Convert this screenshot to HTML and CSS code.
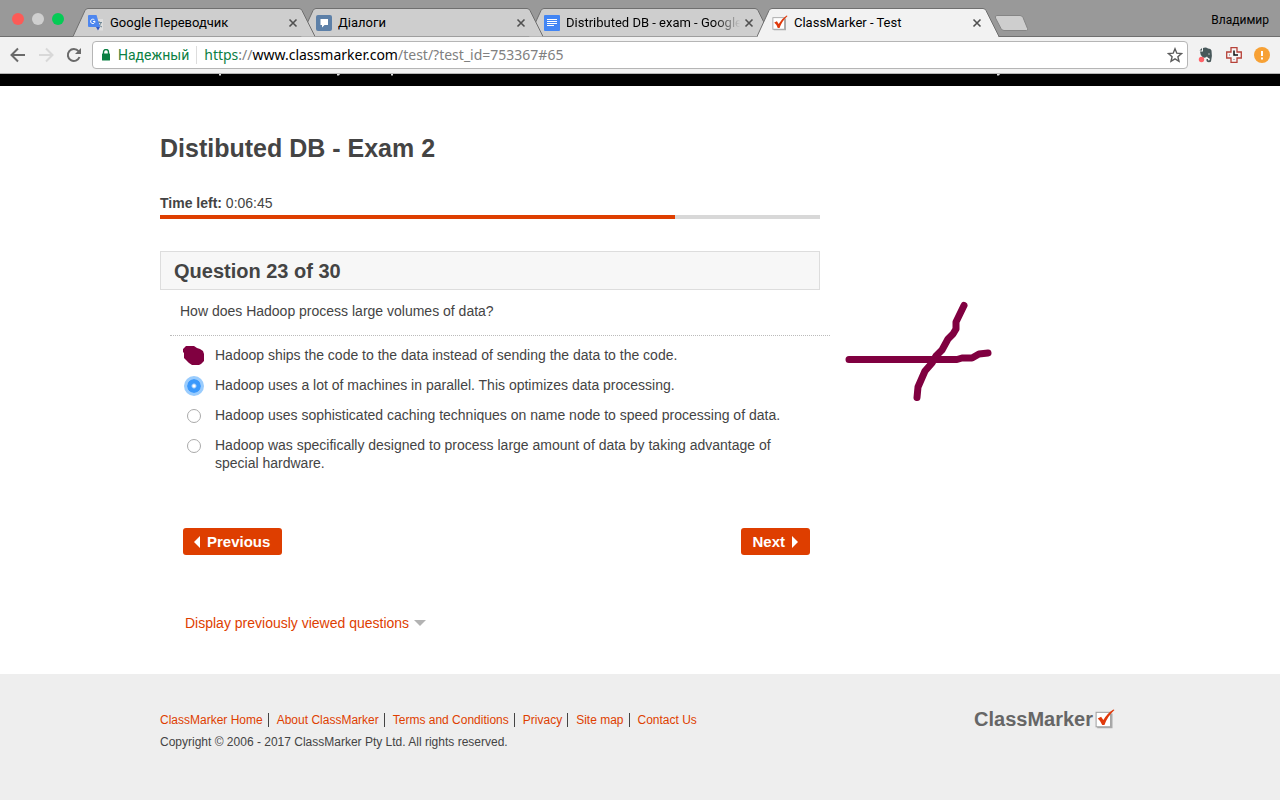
FILE: index.html
```html
<!DOCTYPE html>
<html lang="en">
<head>
<meta charset="utf-8">
<title>ClassMarker - Test</title>
<link rel="stylesheet" href="styles.css">
</head>
<body>
<svg class="defs" aria-hidden="true">
  <symbol id="tab-shape" viewBox="0 0 242 29">
    <path d="M0 28.5 L12 2.5 Q13 .5 15 .5 H226 Q228 .5 229 2.5 L242 28.5" stroke="#6f6f6f"/>
  </symbol>
  <symbol id="close" viewBox="0 0 10 10"><path d="M1.500 1.500l7 7M8.500 1.500l-7 7" stroke="#505050" stroke-width="1.600" fill="none"/></symbol>
  <symbol id="check-logo" viewBox="0 0 18 18">
    <path d="M2 16.500h13V4" fill="none" stroke="#aaa" stroke-width="1.500"/>
    <rect x="1" y="3" width="13" height="13" fill="#fff" stroke="#a5a5a5"/>
    <path d="M2.500 8.500L5.500 7 7.500 10 Q11 4 16.500 .5L17.500 1Q11 7 8.500 14.500H6.500Q5 10.500 2.500 8.500Z" fill="#e03a0c"/>
  </symbol>
</svg>

<header class="browser">
  <div class="tab-strip">
    <div class="lights"><i class="light red"></i><i class="light gray"></i><i class="light green"></i></div>
    <nav class="tabs" aria-label="Tabs">
      <div class="tab first">
        <svg class="shape" aria-hidden="true"><use href="#tab-shape"/></svg>
        <svg class="favicon" viewBox="0 0 16 16" aria-hidden="true">
          <path d="M5 4h10v11.500H10z" fill="#dedede"/>
          <path d="M8.500 7.500h5.500M11 6v1.500M13 8q-1 3-4 4M9.500 8q1.500 3 4.500 4" stroke="#6f8795" fill="none"/>
          <path d="M1 0h7.500L12 12H1Q0 12 0 11V1Q0 0 1 0Z" fill="#4d86ef"/>
          <path d="M8 12h4l-2 3.500z" fill="#3157c4"/>
          <path d="M6.500 5A2.200 2.200 0 1 0 7 6.500H5" fill="none" stroke="#fff"/>
        </svg>
        <span class="tab-title">Google Переводчик</span>
        <button class="close" aria-label="Close tab"><svg width="10" height="10"><use href="#close"/></svg></button>
      </div>
      <div class="tab second">
        <svg class="shape" aria-hidden="true"><use href="#tab-shape"/></svg>
        <svg class="favicon" viewBox="0 0 16 16" aria-hidden="true"><rect width="16" height="16" rx="2" fill="#5d80a8"/><path d="M4.500 4h7.500v6H8.500L6 12.500V10H4.500Z" fill="#fff"/></svg>
        <span class="tab-title">Діалоги</span>
        <button class="close" aria-label="Close tab"><svg width="10" height="10"><use href="#close"/></svg></button>
      </div>
      <div class="tab">
        <svg class="shape" aria-hidden="true"><use href="#tab-shape"/></svg>
        <svg class="favicon" viewBox="0 0 16 16" aria-hidden="true"><rect width="16" height="16" rx="1" fill="#4285f4"/><path d="M3 4.500h10M3 6.500h10M3 8.500h10M3 10.500h7" stroke="#fff"/></svg>
        <span class="tab-title faded">Distributed DB - exam - Google</span>
        <button class="close" aria-label="Close tab"><svg width="10" height="10"><use href="#close"/></svg></button>
      </div>
      <div class="tab active">
        <svg class="shape" aria-hidden="true"><use href="#tab-shape"/></svg>
        <svg class="favicon" viewBox="0 0 18 18" aria-hidden="true"><use href="#check-logo"/></svg>
        <span class="tab-title">ClassMarker - Test</span>
        <button class="close" aria-label="Close tab"><svg width="10" height="10"><use href="#close"/></svg></button>
      </div>
    </nav>
    <button class="new-tab" aria-label="New tab"><svg width="34" height="17" viewBox="0 0 34 17"><path d="M3 .5h23q2 0 3 2l4.500 11q1 2-1 2H10q-2 0-3-2L1.500 3Q.5.5 3 .5Z" fill="#cecece" stroke="#858585"/></svg></button>
    <button class="profile">Владимир</button>
  </div>
  <div class="toolbar">
    <button aria-label="Back"><svg width="16" height="16" viewBox="0 0 16 16"><path d="M15 8H2M8 1.500L1.500 8 8 14.500" fill="none" stroke="#6a6a6a" stroke-width="2"/></svg></button>
    <button aria-label="Forward"><svg width="16" height="16" viewBox="0 0 16 16"><path d="M1 8h13M8 1.500L14.500 8 8 14.500" fill="none" stroke="#d8d8d8" stroke-width="2"/></svg></button>
    <button aria-label="Reload"><svg width="16" height="16" viewBox="0 0 16 16"><path d="M13.500 10A6 6 0 1 1 12.500 4.200" fill="none" stroke="#6a6a6a" stroke-width="2"/><path d="M15 1v6H9z" fill="#6a6a6a"/></svg></button>
    <div class="address">
      <svg width="10" height="12" viewBox="0 0 10 12" aria-hidden="true"><path d="M2.500 5V3a2.500 2.500 0 0 1 5 0v2" fill="none" stroke="#0b8043" stroke-width="1.400"/><rect x="1" y="4.500" width="8" height="7" rx=".5" fill="#0b8043"/></svg>
      <span class="secure">Надежный</span>
      <div class="url" role="textbox" aria-label="Address" contenteditable="true" spellcheck="false"><span class="scheme">https</span>://<span class="host">www.classmarker.com</span>/test/?test_id=753367#65</div>
      <button aria-label="Bookmark"><svg width="16" height="16" viewBox="0 0 16 16"><path d="M8 1.800l1.800 4.400 4.700.4-3.600 3.100 1.100 4.600L8 11.900l-4 2.400 1.100-4.600L1.500 6.600l4.700-.4Z" fill="none" stroke="#5c5c5c" stroke-width="1.400"/></svg></button>
    </div>
    <button aria-label="Web clipper"><svg width="16" height="16" viewBox="0 0 16 16"><path d="M5 1q3-1 5 .5 3 0 3.500 2 1 5-.5 11Q12 15.500 9.500 15 8 14.500 8.500 12h1.500q-.5 1.500 1 1.500 1.500-.5.500-2-2-.5-2.500-2-1 1.500-4 1Q2 8 2 4.500h3Z" fill="#48585a"/><path d="M1.500 3.500L4 1v2.500Z" fill="#48585a"/><circle cx="11" cy="7" r=".7" fill="#ddd"/><circle cx="3.500" cy="12.500" r="2.700" fill="#ff6268"/></svg></button>
    <button aria-label="Timer"><svg width="16" height="16" viewBox="1 1 16 16"><path d="M6 1.700h6V6h4.300v6H12v4.300H6V12H1.700V6H6Z" fill="#f7f5f5" stroke="#b64239" stroke-width="1.300"/><path d="M9 4.500V9h4" stroke="#111" stroke-width="1.500" fill="none"/><path d="M4 9h1M9 13v1" stroke="#777"/></svg></button>
    <button aria-label="Notice"><svg width="16" height="16" viewBox="0 0 16 16"><circle cx="8" cy="8" r="8" fill="#f7a135"/><path d="M8 4v5M8 10.500v2" stroke="#fff" stroke-width="2"/></svg></button>
  </div>
</header>

<div class="site-bar">
  <svg width="960" height="2" viewBox="0 0 960 2" aria-hidden="true"><path d="M59 0h2v1.500h-2zM177 0h3l-1 1.500h-2zM231 0h2v1.500h-2zM837 0h3l-1 1.500h-2z" fill="#ddd"/></svg>
</div>

<main class="page">
  <h1>Distibuted DB - Exam 2</h1>
  <form class="quiz">
    <p class="time"><b>Time left:</b> 0:06:45</p>
    <div class="progress" role="progressbar" aria-label="Time used" aria-valuenow="78"><div class="progress-fill" style="width:78%"></div></div>
    <h2>Question 23 of 30</h2>
    <p class="question" id="question">How does Hadoop process large volumes of data?</p>
    <div class="answers" role="radiogroup" aria-labelledby="question">
      <label><input type="radio" name="answer"><span>Hadoop ships the code to the data instead of sending the data to the code.</span>
        <svg class="blot" width="22" height="20" viewBox="0 0 22 20" aria-hidden="true"><path d="M0 3L3 0H11L14 2 17 3 20 5 21 8V15L18 18 16 19H9L6 17 3 14 1 12V7L0 6Z" fill="#800040"/></svg></label>
      <label><input type="radio" name="answer" checked><span>Hadoop uses a lot of machines in parallel. This optimizes data processing.</span></label>
      <label><input type="radio" name="answer"><span>Hadoop uses sophisticated caching techniques on name node to speed processing of data.</span></label>
      <label><input type="radio" name="answer"><span>Hadoop was specifically designed to process large amount of data by taking advantage of special hardware.</span></label>
      <svg class="cross" width="150" height="102" viewBox="0 0 150 102" aria-hidden="true"><path d="M5 58.500H113L118 57H128L135 53 144 52M120 4.500L112 21V28L109 33 104 38 98 49 92 55 88 62 81 70 74 86 73 96.500" fill="none" stroke="#800040" stroke-width="7" stroke-linecap="round" stroke-linejoin="round"/></svg>
    </div>
    <div class="actions">
      <button type="button"><svg width="6" height="12" viewBox="0 0 6 12" aria-hidden="true"><path d="M6 0v12L0 6Z" fill="#fff"/></svg>Previous</button>
      <button type="button">Next<svg width="6" height="12" viewBox="0 0 6 12" aria-hidden="true"><path d="M0 0v12l6-6Z" fill="#fff"/></svg></button>
    </div>
    <a class="viewed" href="#viewed">Display previously viewed questions<svg width="12" height="6" viewBox="0 0 12 6" aria-hidden="true"><path d="M0 0h12L6 6Z" fill="#b3b3b3"/></svg></a>
  </form>
</main>

<footer class="footer">
  <div class="footer-inner">
    <div>
      <nav class="links" aria-label="Footer">
        <a href="#home">ClassMarker Home</a>
        <a href="#about">About ClassMarker</a>
        <a href="#terms">Terms and Conditions</a>
        <a href="#privacy">Privacy</a>
        <a href="#sitemap">Site map</a>
        <a href="#contact">Contact Us</a>
      </nav>
      <p class="copyright">Copyright © 2006 - 2017 ClassMarker Pty Ltd. All rights reserved.</p>
    </div>
    <a class="logo" href="#home">ClassMarker<svg width="20" height="20" aria-hidden="true"><use href="#check-logo"/></svg></a>
  </div>
</footer>
</body>
</html>
```
FILE: styles.css
```css
* { box-sizing: border-box; }
body {
  margin: 0;
  min-height: 100vh;
  display: flex;
  flex-direction: column;
  background: #fff;
  color: #444;
  font: 14px/18px "Liberation Sans", Arial, sans-serif;
}
h1, h2, p { margin: 0; }
button { border: 0; padding: 0; background: none; font: inherit; color: inherit; }
a { color: #de3e00; text-decoration: none; }
svg { display: block; flex: none; }
.defs { position: absolute; width: 0; height: 0; }

.browser { font-family: Roboto, "Noto Sans", sans-serif; color: #000; }
.tab-strip {
  display: flex;
  align-items: flex-start;
  height: 37px;
  background: #999;
  border-bottom: 1px solid #6f6f6f;
}
.lights { display: flex; gap: 8px; padding: 13px 9px 0 12px; }
.light { width: 12px; height: 12px; border-radius: 50%; }
.red { background: #fc5b57; }
.gray { background: #cfcfcf; }
.green { background: #05cb55; }
.tabs { display: flex; margin-top: 8px; }
.tab {
  position: relative;
  display: flex;
  align-items: center;
  width: 242px;
  height: 29px;
  padding: 0 17px 0 15px;
  isolation: isolate;
  font-size: 13px;
}
.tab + .tab { margin-left: -14px; }
.first { z-index: 3; }
.second { z-index: 2; }
.active { z-index: 4; }
.shape { position: absolute; inset: 0; width: 242px; height: 29px; z-index: -1; fill: #cecece; }
.active .shape { fill: #f2f2f2; }
.active { height: 30px; padding-bottom: 1px; }
.active::after {
  content: "";
  position: absolute;
  left: 1px;
  right: 1px;
  bottom: 0;
  height: 2px;
  z-index: -1;
  background: #f2f2f2;
}
.favicon { width: 16px; height: 16px; }
.tab-title { flex: 1; margin: 0 0 0 6px; overflow: hidden; white-space: nowrap; }
.faded { -webkit-mask-image: linear-gradient(to right, #000 84%, transparent 99%); mask-image: linear-gradient(to right, #000 84%, transparent 99%); }
.close { margin-left: 2px; }
.new-tab { margin: 15px 0 0 -5px; }
.profile { margin: 11px 11px 0 auto; font-size: 12px; line-height: 18px; }

.toolbar {
  display: flex;
  align-items: center;
  gap: 12px;
  height: 37px;
  padding: 0 10px;
  background: #f2f2f2;
  border-bottom: 1px solid #b5b5b5;
}
.address {
  flex: 1;
  display: flex;
  align-items: center;
  height: 28px;
  margin: 0 -2px;
  padding: 0 4px 0 8px;
  background: #fff;
  border: 1px solid #b5b5b5;
  border-radius: 4px;
  font-size: 14px;
}
.secure { margin-left: 7px; padding-right: 7px; border-right: 1px solid #ddd; color: #0b8043; }
.url { flex: 1; margin-left: 7px; color: #808080; font-family: "Noto Sans", Roboto, sans-serif; white-space: nowrap; outline: 0; }
.scheme { color: #0b8043; }
.host { color: #000; }

.site-bar { height: 12px; padding: 0 calc(50% - 480px); background: #000; overflow: hidden; }
.page, .footer-inner { width: 100%; max-width: 960px; margin: 0 auto; }
.page { padding: 46px 0 42px; }
h1 { font-size: 25px; line-height: 32px; }
.quiz { max-width: 660px; margin-top: 30px; }
.progress { height: 4px; margin-top: 3px; background: #d8d8d8; }
.progress-fill { height: 4px; background: #de3e00; }
h2 {
  margin-top: 32px;
  padding: 7px 13px 5px;
  background: #f7f7f7;
  border: 1px solid #ddd;
  font-size: 20px;
  line-height: 25px;
}
.question { margin: 0 -10px 0 10px; padding: 12px 10px 15px; border-bottom: 1px dotted #bbb; }
.answers { position: relative; display: grid; gap: 12px; padding: 10px 20px 0 27px; }
.answers label { position: relative; display: flex; align-items: flex-start; gap: 14px; }
.answers input {
  appearance: none;
  flex: none;
  width: 14px;
  height: 14px;
  margin: 3px 0 0;
  border: 1px solid #aaa;
  border-radius: 50%;
  background: #fff;
}
.answers input:checked {
  border: 0;
  background: radial-gradient(circle, #fff 1px, #3b99fc 3px);
  box-shadow: 0 0 0 3px #9accfd;
}
.blot { position: absolute; left: -4px; top: 0; }
.cross { position: absolute; left: 684px; top: -35px; }
.actions { display: flex; justify-content: space-between; margin-top: 56px; padding: 0 10px 0 23px; }
.actions button {
  display: flex;
  align-items: center;
  gap: 7px;
  height: 27px;
  padding: 0 12px 0 11px;
  background: #de3e00;
  border-radius: 3px;
  color: #fff;
  font-size: 15px;
  font-weight: bold;
}
.viewed { display: flex; align-items: center; gap: 5px; margin: 59px 0 0 25px; }

.footer { flex: 1; padding: 35px 0; background: #eee; font-size: 12px; line-height: 22px; }
.footer-inner { display: flex; justify-content: space-between; align-items: flex-start; padding-right: 5px; }
.links { display: flex; align-items: center; height: 22px; }
.links a { line-height: 14px; }
.links a + a { margin-left: 5px; padding-left: 8px; border-left: 1px solid #444; }
.logo { display: flex; align-items: center; gap: 2px; color: #666; font-size: 20px; font-weight: bold; line-height: 20px; }
```
